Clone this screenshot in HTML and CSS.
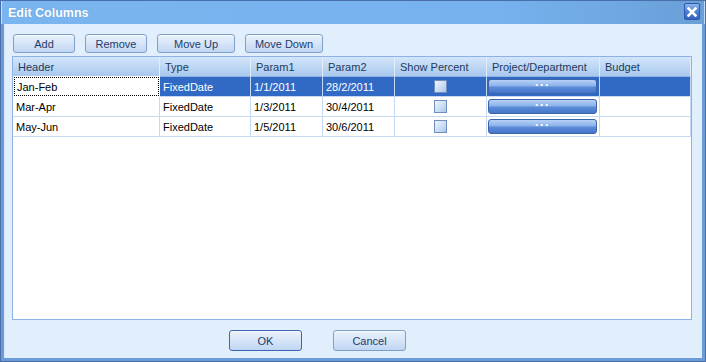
FILE: index.html
```html
<!DOCTYPE html>
<html lang="en">
<head>
    <meta charset="UTF-8">
    <title>Edit Columns</title>
    <link rel="stylesheet" href="styles.css">
</head>
<body>

    <div class="window">
        <!-- Title bar -->
        <div class="titlebar">
            <span class="title">Edit Columns</span>
            <button class="close" title="Close">
                <svg width="10" height="10" viewBox="0 0 10 10">
                    <path d="M1.5 1.5 L8.5 8.5 M8.5 1.5 L1.5 8.5" stroke="#fff" stroke-width="2.6" stroke-linecap="square"/>
                </svg>
            </button>
        </div>

        <div class="content">
            <!-- Toolbar -->
            <div class="toolbar">
                <button class="btn btn-small">Add</button>
                <button class="btn btn-small">Remove</button>
                <button class="btn btn-wide">Move Up</button>
                <button class="btn btn-wide">Move Down</button>
            </div>

            <!-- Columns grid -->
            <div class="grid">
                <div class="row head">
                    <div class="cell">Header</div>
                    <div class="cell">Type</div>
                    <div class="cell">Param1</div>
                    <div class="cell">Param2</div>
                    <div class="cell">Show Percent</div>
                    <div class="cell">Project/Department</div>
                    <div class="cell">Budget</div>
                </div>
                <div class="row selected">
                    <div class="cell focus">Jan-Feb</div>
                    <div class="cell">FixedDate</div>
                    <div class="cell">1/1/2011</div>
                    <div class="cell">28/2/2011</div>
                    <div class="cell center"><span class="check"></span></div>
                    <div class="cell center"><button class="dots">&middot;&middot;&middot;</button></div>
                    <div class="cell"></div>
                </div>
                <div class="row">
                    <div class="cell">Mar-Apr</div>
                    <div class="cell">FixedDate</div>
                    <div class="cell">1/3/2011</div>
                    <div class="cell">30/4/2011</div>
                    <div class="cell center"><span class="check"></span></div>
                    <div class="cell center"><button class="dots">&middot;&middot;&middot;</button></div>
                    <div class="cell"></div>
                </div>
                <div class="row">
                    <div class="cell">May-Jun</div>
                    <div class="cell">FixedDate</div>
                    <div class="cell">1/5/2011</div>
                    <div class="cell">30/6/2011</div>
                    <div class="cell center"><span class="check"></span></div>
                    <div class="cell center"><button class="dots">&middot;&middot;&middot;</button></div>
                    <div class="cell"></div>
                </div>
            </div>

            <!-- Dialog buttons -->
            <div class="footer">
                <button class="btn btn-dialog btn-default">OK</button>
                <button class="btn btn-dialog">Cancel</button>
            </div>
        </div>
    </div>

</body>
</html>
```

FILE: styles.css
```css
* {
    box-sizing: border-box;
}
body {
    margin: 0;
    font-family: "Liberation Sans", Arial, sans-serif;
    font-size: 11px;
    background: #fff;
}
.window {
    width: 706px;
    height: 362px;
    border: 1px solid #4a6ea9;
    background: #e1eefb;
    display: flex;
    flex-direction: column;
}
.titlebar {
    height: 23px;
    display: flex;
    align-items: center;
    justify-content: space-between;
    padding: 0 4px 0 6px;
    background: linear-gradient(to right, #7ab5ef 0%, #76b2ee 70%, #6ea6e0 90%, #6a9ed6 100%);
    border-left: 1px solid #c9dcf3;
    border-right: 1px solid #c9dcf3;
}
.title {
    color: #fff;
    font-weight: bold;
    font-size: 12.5px;
    text-shadow: 0 0 1px #5a8cc8;
}
.close {
    width: 16px;
    height: 17px;
    padding: 0;
    margin-top: -2px;
    display: flex;
    align-items: center;
    justify-content: center;
    border: 1px solid #2f58a6;
    border-radius: 2px;
    background: linear-gradient(#8fb5ee, #4f80d8 50%, #3464c2);
}
.content {
    flex: 1;
    display: flex;
    flex-direction: column;
    padding: 10px 10px 7px 8px;
    border-left: 3px solid #6c9cd8;
    border-right: 3px solid #6c9cd8;
    border-bottom: 3px solid #6c9cd8;
    box-shadow: inset 1px 0 0 #d7e6f8;
}
.toolbar {
    display: flex;
    gap: 10px;
    padding-left: 1px;
    margin-bottom: 3px;
}
.btn {
    height: 19px;
    padding: 0;
    font-family: "Liberation Sans", Arial, sans-serif;
    font-size: 11px;
    color: #1e3c6b;
    border: 1px solid #7f9fc6;
    border-radius: 3px;
    background: linear-gradient(#e9f1fc, #d6e5f8 50%, #c0d6f1);
    box-shadow: inset 0 1px 0 #f6faff;
}
.btn-small {
    width: 62px;
}
.btn-wide {
    width: 78px;
}
.grid {
    flex: 1;
    background: #fff;
    border: 1px solid #8db2e3;
}
.row {
    display: grid;
    grid-template-columns: 147px 91px 72px 72px 92px 113px 1fr;
    height: 20px;
}
.cell {
    display: flex;
    align-items: center;
    padding-left: 3px;
    border-right: 1px solid #c6d9f2;
    border-bottom: 1px solid #c6d9f2;
    color: #000;
    white-space: nowrap;
}
.head .cell {
    padding-left: 5px;
    color: #1e395b;
    background: linear-gradient(#d3e5fa, #bcd6f4 55%, #a9c8ee);
    border-right: 1px solid #e2edfb;
    border-bottom: 1px solid #8fb3e2;
}
.selected .cell {
    background: #316ac5;
    color: #fff;
}
.selected .cell.focus {
    background: #fff;
    color: #000;
    padding-left: 2px;
    border: 1px dotted #000;
    margin: 0 1px 1px 1px;
    outline: 1px solid #fff;
}
.cell.center {
    justify-content: center;
    padding-left: 0;
}
.check {
    width: 13px;
    height: 13px;
    border: 1px solid #6f8fbf;
    background: linear-gradient(135deg, #eef4fc, #c9dcf3 60%, #aac6ea);
}
.dots {
    width: 109px;
    height: 15px;
    padding: 0 0 2px 0;
    margin-left: -1px;
    border: 1px solid #3c64a9;
    border-radius: 3px;
    color: #fff;
    font-family: "Liberation Sans", Arial, sans-serif;
    font-size: 12px;
    font-weight: bold;
    letter-spacing: 1px;
    line-height: 11px;
    background: linear-gradient(#b7d1f5, #8ab2ea 45%, #5c8cd8 55%, #4474c8);
}
.footer {
    display: flex;
    gap: 31px;
    padding-left: 217px;
    margin-top: 10px;
}
.btn-dialog {
    width: 73px;
    height: 21px;
}
.btn-default {
    border-color: #3a66b4;
}
```
